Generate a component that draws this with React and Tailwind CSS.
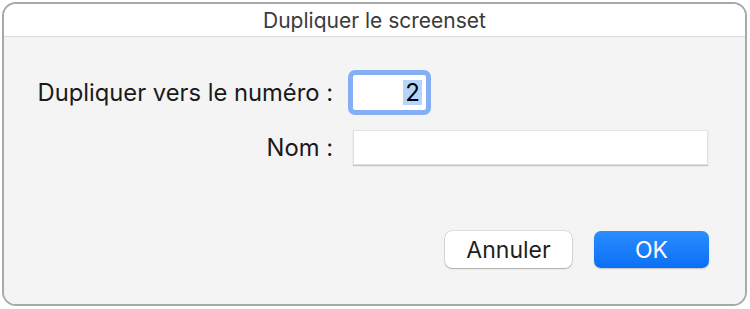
import React from "react";

export default function App() {
  return (
    <div className="w-[750px] h-[309px] bg-white" style={{ fontFamily: "Inter, 'Liberation Sans', sans-serif" }}>
      <div className="ml-[2px] mt-[2px] w-[745px] h-[304px] border-2 border-[#a9a9a9] rounded-[14px] overflow-hidden flex flex-col">
        <div className="h-[33px] bg-white border-b border-[#dadada] flex items-center justify-center text-[21px] text-[#3a3a3a] pt-[1px]">
          Dupliquer le screenset
        </div>

        <div className="flex-1 bg-[#f4f4f4] pl-[30px] pr-[36px] pt-[33px] flex flex-col">
          <div className="flex items-center h-[45px]">
            <div className="w-[299px] text-right text-[23.75px] text-[#1a1a1a] pt-[1px]">Dupliquer vers le numéro :</div>
            <div className="ml-[15px] w-[83px] h-[45px] rounded-[7px] bg-[#86aef4] p-[5px]">
              <div className="w-full h-full bg-white rounded-[2px] flex items-center justify-end pr-[4px]">
                <span className="h-[25px] px-[2px] bg-[#b5d5fd] flex items-center text-[24px] text-black leading-none">2</span>
              </div>
            </div>
          </div>

          <div className="flex items-center h-[35px] mt-[15px]">
            <div className="w-[299px] text-right text-[23.75px] text-[#1a1a1a] pt-[1px]">Nom :</div>
            <div className="ml-[20px] w-[355px] h-[35px] bg-white border border-[#e2e2e2] shadow-[0_1px_1px_rgba(0,0,0,0.2)]"></div>
          </div>

          <div className="flex justify-end gap-[22px] mt-[66px]">
            <button className="w-[127px] h-[37px] pt-[2px] rounded-[7px] bg-white text-[23px] text-[#1f1f1f] shadow-[0_0_0_0.5px_rgba(0,0,0,0.18),0_1px_1.5px_rgba(0,0,0,0.22)]">
              Annuler
            </button>
            <button className="w-[115px] h-[37px] pt-[2px] rounded-[7px] bg-gradient-to-b from-[#2a8dff] to-[#0a6ff4] text-[23px] text-white shadow-[0_1px_1.5px_rgba(0,0,0,0.2)]">
              OK
            </button>
          </div>
        </div>
      </div>
    </div>
  );
}
